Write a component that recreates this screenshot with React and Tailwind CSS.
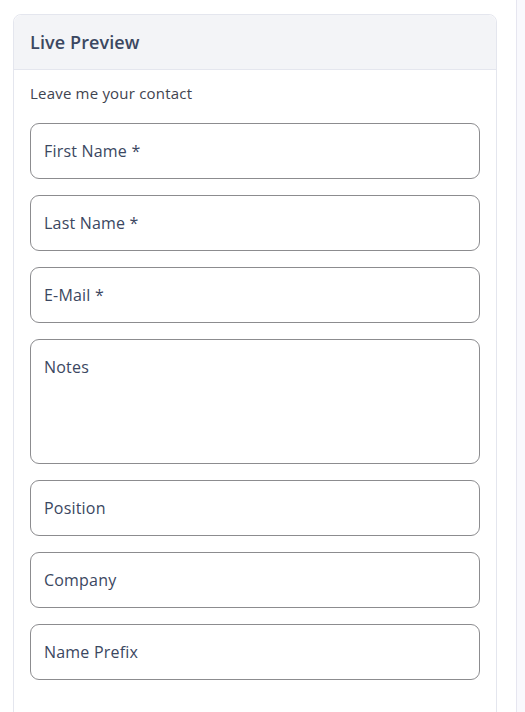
import React from 'react';

const fields = [
  { label: 'First Name *' },
  { label: 'Last Name *' },
  { label: 'E-Mail *' },
  { label: 'Notes', multiline: true },
  { label: 'Position' },
  { label: 'Company' },
  { label: 'Name Prefix' },
];

const App = () => {
  return (
    <div className="flex min-h-[712px] bg-white" style={{ fontFamily: '"Open Sans", "Liberation Sans", sans-serif' }}>
      <div className="w-[516px] shrink-0 pl-[13px] pr-[19px] pt-[14px]">
        <div className="rounded-t-[8px] border border-[#e4e6ee] bg-white min-h-[720px]">
          {/* Header */}
          <div className="h-[55px] rounded-t-[8px] border-b border-[#e4e6ee] bg-[#f3f4f7] px-4 flex items-center">
            <h2 className="text-[18px] font-semibold text-[#3b4761] tracking-[0.1px]">Live Preview</h2>
          </div>

          {/* Form */}
          <div className="px-4 pt-[13px]">
            <p className="text-[15px] font-medium text-[#3f4450] leading-[20px] tracking-[0.2px] mb-[20px]">Leave me your contact</p>
            <div className="flex flex-col gap-4">
              {fields.map((f) =>
                f.multiline ? (
                  <textarea
                    key={f.label}
                    placeholder={f.label}
                    className="h-[125px] w-full resize-none rounded-[9px] border border-[#8c8c8f] px-[13px] pt-[15px] text-[16px] tracking-[0.2px] text-[#3b4761] placeholder:text-[#3b4761] outline-none"
                  />
                ) : (
                  <input
                    key={f.label}
                    placeholder={f.label}
                    className="h-[56px] w-full rounded-[9px] border border-[#8c8c8f] px-[13px] text-[16px] tracking-[0.2px] text-[#3b4761] placeholder:text-[#3b4761] outline-none"
                  />
                )
              )}
            </div>
          </div>
        </div>
      </div>
      <div className="flex-1 border-l border-[#e6e6f0] bg-[#f9f9fd]" />
    </div>
  );
};

export default App;
